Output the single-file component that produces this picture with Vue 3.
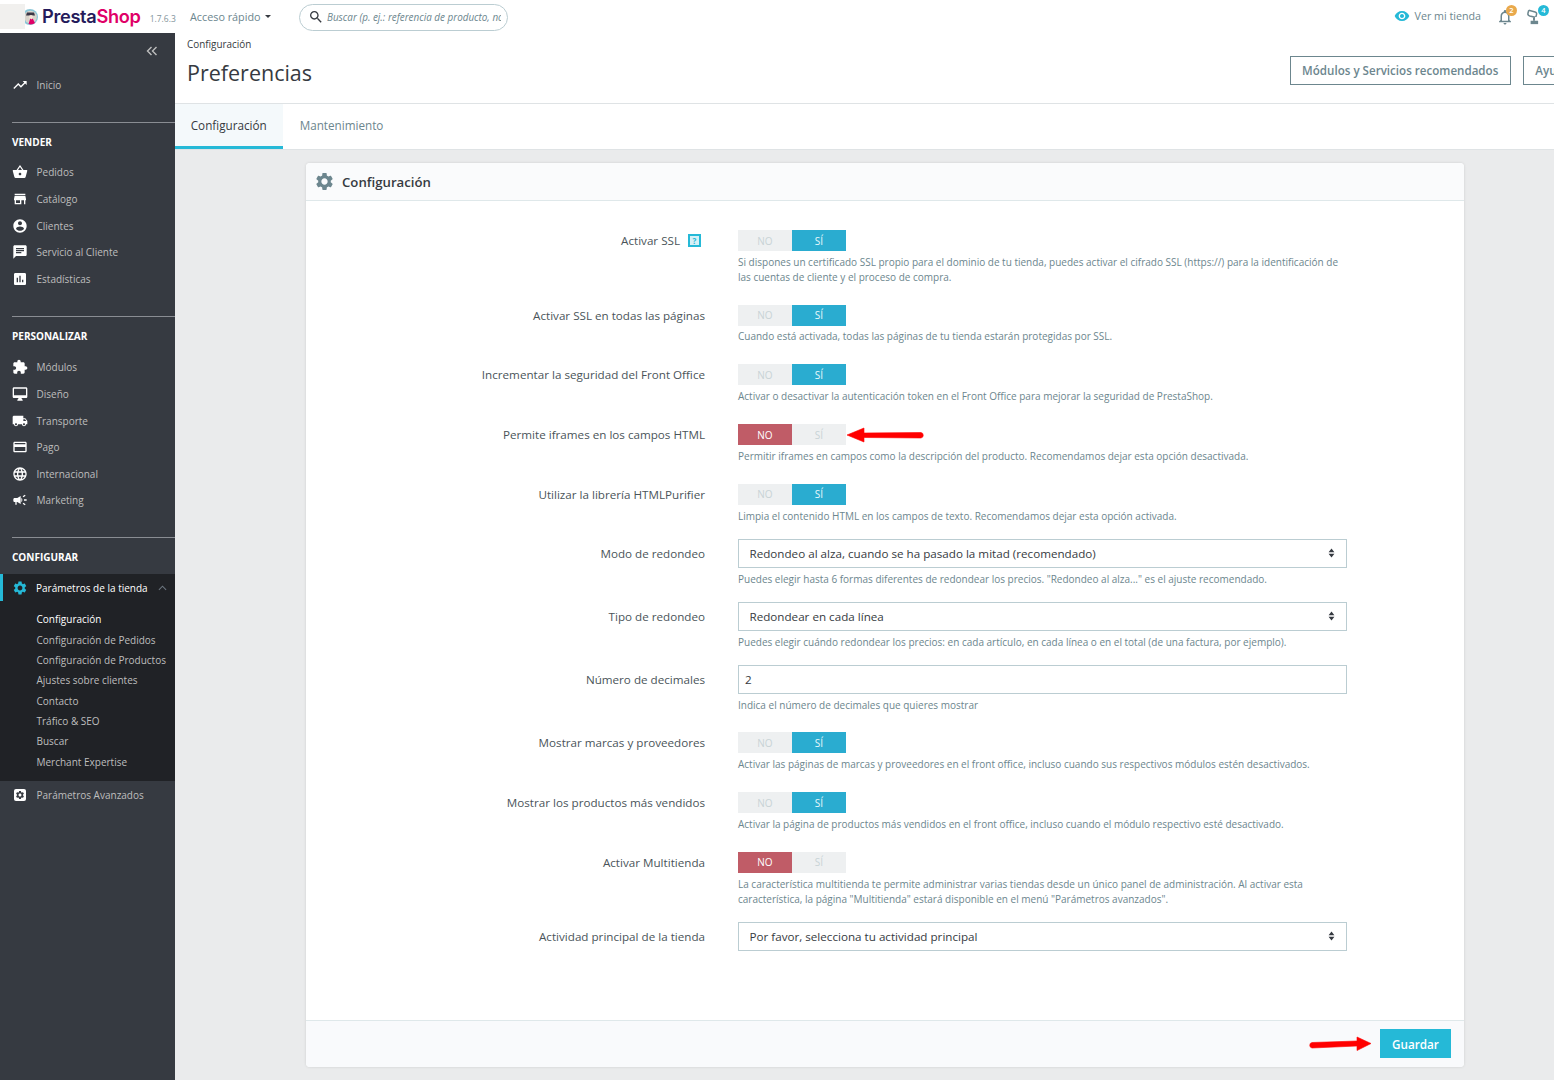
<script setup>
const P = {
  trend: 'M16 6l2.29 2.29-4.88 4.88-4-4L2 16.59 3.41 18l6-6 4 4 6.3-6.29L22 12V6z',
  basket: 'M17.21 9l-4.38-6.56c-.19-.28-.51-.42-.83-.42-.32 0-.64.14-.83.43L6.79 9H2c-.55 0-1 .45-1 1 0 .09.01.18.04.27l2.54 9.27c.23.84 1 1.46 1.92 1.46h13c.92 0 1.69-.62 1.93-1.46l2.54-9.27L23 10c0-.55-.45-1-1-1h-4.79zM9 9l3-4.4L15 9H9zm3 8c-1.1 0-2-.9-2-2s.9-2 2-2 2 .9 2 2-.9 2-2 2z',
  store: 'M20 4H4v2h16V4zm1 10v-2l-1-5H4l-1 5v2h1v6h10v-6h4v6h2v-6h1zm-9 4H6v-4h6v4z',
  account: 'M12 2C6.48 2 2 6.48 2 12s4.48 10 10 10 10-4.48 10-10S17.52 2 12 2zm0 3c1.66 0 3 1.34 3 3s-1.34 3-3 3-3-1.34-3-3 1.34-3 3-3zm0 14.2c-2.5 0-4.71-1.28-6-3.22.03-1.99 4-3.08 6-3.08 1.99 0 5.97 1.09 6 3.08-1.29 1.94-3.5 3.22-6 3.22z',
  chat: 'M20 2H4c-1.1 0-1.99.9-1.99 2L2 22l4-4h14c1.1 0 2-.9 2-2V4c0-1.1-.9-2-2-2zM6 9h12v2H6V9zm8 5H6v-2h8v2zm4-6H6V6h12v2z',
  stats: 'M19 3H5c-1.1 0-2 .9-2 2v14c0 1.1.9 2 2 2h14c1.1 0 2-.9 2-2V5c0-1.1-.9-2-2-2zM9 17H7v-7h2v7zm4 0h-2V7h2v10zm4 0h-2v-4h2v4z',
  puzzle: 'M20.5 11H19V7c0-1.1-.9-2-2-2h-4V3.5C13 2.12 11.88 1 10.5 1S8 2.12 8 3.5V5H4c-1.1 0-1.99.9-1.99 2v3.8H3.5c1.49 0 2.7 1.21 2.7 2.7s-1.21 2.7-2.7 2.7H2V20c0 1.1.9 2 2 2h3.8v-1.5c0-1.49 1.21-2.7 2.7-2.7 1.49 0 2.7 1.21 2.7 2.7V22H17c1.1 0 2-.9 2-2v-4h1.5c1.38 0 2.5-1.12 2.5-2.5S21.88 11 20.5 11z',
  desktop: 'M21 2H3c-1.1 0-2 .9-2 2v12c0 1.1.9 2 2 2h7l-2 3v1h8v-1l-2-3h7c1.1 0 2-.9 2-2V4c0-1.1-.9-2-2-2zm0 12H3V4h18v10z',
  truck: 'M20 8h-3V4H3c-1.1 0-2 .9-2 2v11h2c0 1.66 1.34 3 3 3s3-1.34 3-3h6c0 1.66 1.34 3 3 3s3-1.34 3-3h2v-5l-3-4zM6 18.5c-.83 0-1.5-.67-1.5-1.5s.67-1.5 1.5-1.5 1.5.67 1.5 1.5-.67 1.5-1.5 1.5zm13.5-9l1.96 2.5H17V9.5h2.5zm-1.5 9c-.83 0-1.5-.67-1.5-1.5s.67-1.5 1.5-1.5 1.5.67 1.5 1.5-.67 1.5-1.5 1.5z',
  card: 'M20 4H4c-1.11 0-1.99.89-1.99 2L2 18c0 1.11.89 2 2 2h16c1.11 0 2-.89 2-2V6c0-1.11-.89-2-2-2zm0 14H4v-6h16v6zm0-10H4V6h16v2z',
  globe: 'M11.99 2C6.47 2 2 6.48 2 12s4.47 10 9.99 10C17.52 22 22 17.52 22 12S17.52 2 11.99 2zm6.93 6h-2.95c-.32-1.25-.78-2.45-1.38-3.56 1.84.63 3.37 1.91 4.33 3.56zM12 4.04c.83 1.2 1.48 2.53 1.91 3.96h-3.82c.43-1.43 1.08-2.76 1.91-3.96zM4.26 14C4.1 13.36 4 12.69 4 12s.1-1.36.26-2h3.38c-.08.66-.14 1.32-.14 2 0 .68.06 1.34.14 2H4.26zm.82 2h2.95c.32 1.25.78 2.45 1.38 3.56-1.84-.63-3.37-1.9-4.33-3.56zm2.95-8H5.08c.96-1.66 2.49-2.93 4.33-3.56C8.81 5.55 8.35 6.75 8.03 8zM12 19.96c-.83-1.2-1.48-2.53-1.91-3.96h3.82c-.43 1.43-1.08 2.76-1.91 3.96zM14.34 14H9.66c-.09-.66-.16-1.32-.16-2 0-.68.07-1.35.16-2h4.68c.09.65.16 1.32.16 2 0 .68-.07 1.34-.16 2zm.25 5.56c.6-1.11 1.06-2.31 1.38-3.56h2.95c-.96 1.65-2.49 2.93-4.33 3.56zM16.36 14c.08-.66.14-1.32.14-2 0-.68-.06-1.34-.14-2h3.38c.16.64.26 1.31.26 2s-.1 1.36-.26 2h-3.38z',
  mega: 'M18 11v2h4v-2h-4zm-2 6.61c.96.71 2.21 1.65 3.2 2.39.4-.53.8-1.07 1.2-1.6-.99-.74-2.24-1.68-3.2-2.4-.4.54-.8 1.08-1.2 1.61zM20.4 5.6c-.4-.53-.8-1.07-1.2-1.6-.99.74-2.24 1.68-3.2 2.4.4.53.8 1.07 1.2 1.6.96-.72 2.21-1.65 3.2-2.4zM4 9c-1.1 0-2 .9-2 2v2c0 1.1.9 2 2 2h1v4h2v-4h1l5 3V6L8 9H4zm11.5 3c0-1.33-.58-2.53-1.5-3.35v6.69c.92-.81 1.5-2.01 1.5-3.34z',
  gear: 'M19.14 12.94c.04-.3.06-.61.06-.94 0-.32-.02-.64-.07-.94l2.03-1.58c.18-.14.23-.41.12-.61l-1.92-3.32c-.12-.22-.37-.29-.59-.22l-2.39.96c-.5-.38-1.03-.7-1.62-.94l-.36-2.54c-.04-.24-.24-.41-.48-.41h-3.84c-.24 0-.43.17-.47.41l-.36 2.54c-.59.24-1.13.57-1.62.94l-2.39-.96c-.22-.08-.47 0-.59.22L2.74 8.87c-.12.21-.08.47.12.61l2.03 1.58c-.05.3-.09.63-.09.94s.02.64.07.94l-2.03 1.58c-.18.14-.23.41-.12.61l1.92 3.32c.12.22.37.29.59.22l2.39-.96c.5.38 1.03.7 1.62.94l.36 2.54c.05.24.24.41.48.41h3.84c.24 0 .44-.17.47-.41l.36-2.54c.59-.24 1.13-.56 1.62-.94l2.39.96c.22.08.47 0 .59-.22l1.92-3.32c.12-.22.07-.47-.12-.61l-2.01-1.58zM12 15.6c-1.98 0-3.6-1.62-3.6-3.6s1.62-3.6 3.6-3.6 3.6 1.62 3.6 3.6-1.62 3.6-3.6 3.6z',
  eye: 'M12 4.5C7 4.5 2.73 7.61 1 12c1.73 4.39 6 7.5 11 7.5s9.27-3.11 11-7.5c-1.73-4.39-6-7.5-11-7.5zM12 17c-2.76 0-5-2.24-5-5s2.24-5 5-5 5 2.24 5 5-2.24 5-5 5zm0-8c-1.66 0-3 1.34-3 3s1.34 3 3 3 3-1.34 3-3-1.34-3-3-3z',
  bell: 'M12 22c1.1 0 2-.9 2-2h-4c0 1.1.9 2 2 2zm6-6v-5c0-3.07-1.63-5.64-4.5-6.32V4c0-.83-.67-1.5-1.5-1.5s-1.5.67-1.5 1.5v.68C7.64 5.36 6 7.92 6 11v5l-2 2v1h16v-1l-2-2zm-2 1H8v-6c0-2.48 1.51-4.5 4-4.5s4 2.02 4 4.5v6z',
  search: 'M15.5 14h-.79l-.28-.27C15.41 12.59 16 11.11 16 9.5 16 5.91 13.09 3 9.5 3S3 5.91 3 9.5 5.91 16 9.5 16c1.61 0 3.09-.59 4.23-1.57l.27.28v.79l5 4.99L20.49 19l-4.99-5zm-6 0C7.01 14 5 11.99 5 9.5S7.01 5 9.5 5 14 7.01 14 9.5 11.99 14 9.5 14z'
}

const groups = [
  { title: 'VENDER', cls: 'g-vender', items: [
    ['Pedidos', P.basket], ['Catálogo', P.store], ['Clientes', P.account],
    ['Servicio al Cliente', P.chat], ['Estadísticas', P.stats]
  ] },
  { title: 'PERSONALIZAR', cls: 'g-pers', items: [
    ['Módulos', P.puzzle], ['Diseño', P.desktop], ['Transporte', P.truck],
    ['Pago', P.card], ['Internacional', P.globe], ['Marketing', P.mega]
  ] }
]

const subItems = ['Configuración', 'Configuración de Pedidos', 'Configuración de Productos', 'Ajustes sobre clientes', 'Contacto', 'Tráfico & SEO', 'Buscar', 'Merchant Expertise']

const rows = [
  { label: 'Activar SSL', type: 'toggle', on: true, hint: true, help: 'Si dispones un certificado SSL propio para el dominio de tu tienda, puedes activar el cifrado SSL (https://) para la identificación de las cuentas de cliente y el proceso de compra.' },
  { label: 'Activar SSL en todas las páginas', type: 'toggle', on: true, help: 'Cuando está activada, todas las páginas de tu tienda estarán protegidas por SSL.' },
  { label: 'Incrementar la seguridad del Front Office', type: 'toggle', on: true, help: 'Activar o desactivar la autenticación token en el Front Office para mejorar la seguridad de PrestaShop.' },
  { label: 'Permite iframes en los campos HTML', type: 'toggle', on: false, arrow: true, help: 'Permitir iframes en campos como la descripción del producto. Recomendamos dejar esta opción desactivada.' },
  { label: 'Utilizar la librería HTMLPurifier', type: 'toggle', on: true, help: 'Limpia el contenido HTML en los campos de texto. Recomendamos dejar esta opción activada.' },
  { label: 'Modo de redondeo', type: 'select', value: 'Redondeo al alza, cuando se ha pasado la mitad (recomendado)', help: 'Puedes elegir hasta 6 formas diferentes de redondear los precios. "Redondeo al alza..." es el ajuste recomendado.' },
  { label: 'Tipo de redondeo', type: 'select', value: 'Redondear en cada línea', help: 'Puedes elegir cuándo redondear los precios: en cada artículo, en cada línea o en el total (de una factura, por ejemplo).' },
  { label: 'Número de decimales', type: 'input', value: '2', help: 'Indica el número de decimales que quieres mostrar' },
  { label: 'Mostrar marcas y proveedores', type: 'toggle', on: true, help: 'Activar las páginas de marcas y proveedores en el front office, incluso cuando sus respectivos módulos estén desactivados.' },
  { label: 'Mostrar los productos más vendidos', type: 'toggle', on: true, help: 'Activar la página de productos más vendidos en el front office, incluso cuando el módulo respectivo esté desactivado.' },
  { label: 'Activar Multitienda', type: 'toggle', on: false, help: 'La característica multitienda te permite administrar varias tiendas desde un único panel de administración. Al activar esta característica, la página "Multitienda" estará disponible en el menú "Parámetros avanzados".' },
  { label: 'Actividad principal de la tienda', type: 'select', value: 'Por favor, selecciona tu actividad principal' }
]
</script>

<template>
  <div class="app">
    <header class="topbar">
      <div class="logo">
        <svg class="mascot" viewBox="0 0 16 16" width="16" height="16">
          <circle cx="8" cy="8" r="8" fill="#8cc7d8"/>
          <circle cx="8.500" cy="8" r="6.300" fill="#d9d4cc"/>
          <path d="M5 3.500h7l1 3H4z" fill="#3b3545"/>
          <circle cx="9" cy="8" r="2" fill="#f3e3d5"/>
          <path d="M6.500 15l1.800-5.500 1.200 1 1.200-1 2.300 4.500c-1.500 1.300-4 2-6.500 1z" fill="#df0067"/>
        </svg>
        <span class="logo-patch"></span>
        <span class="logo-text"><span class="presta">Presta</span><span class="shop">Shop</span></span>
        <span class="version">1.7.6.3</span>
      </div>
      <div class="quick">Acceso rápido<span class="caret"></span></div>
      <div class="search">
        <svg viewBox="0 0 24 24" width="16" height="16"><path :d="P.search" fill="#363a41"/></svg>
        <span class="search-text">Buscar (p. ej.: referencia de producto, nombre de cliente…)</span>
      </div>
      <div class="top-right">
        <a class="view-shop">
          <svg viewBox="0 0 24 24" width="16" height="16"><path :d="P.eye" fill="#25b9d7"/></svg>
          <span>Ver mi tienda</span>
        </a>
        <span class="notif n-bell">
          <svg viewBox="0 0 24 24" width="18" height="18"><path :d="P.bell" fill="#6c868e"/></svg>
          <b class="badge orange">2</b>
        </span>
        <span class="notif n-trophy">
          <svg viewBox="0 0 24 24" width="18" height="18">
            <path d="M5 3l8.500 2.200c1.500.4 2.300 1.900 1.900 3.300l-.9 3.300M5 3L4 6.600c-.5 1.800.5 3.500 2.300 4l7.200 1.800" fill="none" stroke="#6c868e" stroke-width="2"/>
            <path d="M12 12.500V17" stroke="#6c868e" stroke-width="2.600"/>
            <path d="M7.500 17h10v4.500h-10z" fill="#6c868e"/>
          </svg>
          <b class="badge blue">4</b>
        </span>
      </div>
    </header>

    <div class="body">
      <aside class="sidebar">
        <div class="collapse">
          <svg viewBox="0 0 12 10" width="12" height="10"><path d="M5.500 1L1.500 5l4 4M10.500 1l-4 4 4 4" fill="none" stroke="#bebebe" stroke-width="1.4"/></svg>
        </div>
        <div class="nav-item home">
          <svg viewBox="0 0 24 24" width="16" height="16"><path :d="P.trend" fill="#fff"/></svg>
          <span>Inicio</span>
        </div>

        <section v-for="g in groups" :key="g.title" class="group" :class="g.cls">
          <h4>{{ g.title }}</h4>
          <div v-for="it in g.items" :key="it[0]" class="nav-item">
            <svg viewBox="0 0 24 24" width="16" height="16"><path :d="it[1]" fill="#fff"/></svg>
            <span>{{ it[0] }}</span>
          </div>
        </section>

        <section class="group g-conf">
          <h4>CONFIGURAR</h4>
          <div class="open-block">
            <div class="open-head">
              <svg viewBox="0 0 24 24" width="16" height="16"><path :d="P.gear" fill="#25b9d7"/></svg>
              <span>Parámetros de la tienda</span>
              <svg class="chev" viewBox="0 0 10 6" width="9" height="6"><path d="M1 5l4-4 4 4" fill="none" stroke="#6c7680" stroke-width="1.2"/></svg>
            </div>
            <ul class="sub">
              <li v-for="(s, i) in subItems" :key="s" :class="{ current: i === 0 }">{{ s }}</li>
            </ul>
          </div>
          <div class="nav-item adv">
            <span class="adv-icon"><svg viewBox="0 0 24 24" width="10" height="10"><path :d="P.gear" fill="#363a41"/></svg></span>
            <span>Parámetros Avanzados</span>
          </div>
        </section>
      </aside>

      <main class="main">
        <div class="page-head">
          <div class="crumb">Configuración</div>
          <div class="title-row">
            <h1>Preferencias</h1>
            <div class="head-btns">
              <button class="outline">Módulos y Servicios recomendados</button>
              <button class="outline">Ayuda</button>
            </div>
          </div>
        </div>
        <nav class="tabs">
          <a class="tab active">Configuración</a>
          <a class="tab">Mantenimiento</a>
        </nav>
        <div class="content">
          <div class="panel">
            <div class="panel-head">
              <svg viewBox="0 0 24 24" width="21" height="21"><path :d="P.gear" fill="#6c868e"/></svg>
              <span>Configuración</span>
            </div>
            <div class="form">
              <div v-for="r in rows" :key="r.label" class="row" :class="'row-' + r.type">
                <div class="label" :class="'label-' + r.type">
                  <span>{{ r.label }}</span>
                  <span v-if="r.hint" class="hint">?</span>
                </div>
                <div class="control">
                  <div v-if="r.type === 'toggle'" class="toggle">
                    <span class="half" :class="{ 'no-on': !r.on }">NO</span>
                    <span class="half" :class="{ 'si-on': r.on }">SÍ</span>
                    <svg v-if="r.arrow" class="arrow arrow-left" viewBox="0 0 78 16" width="78" height="16">
                      <path d="M1 8L18 1v5l57-.5a2.800 2.800 0 010 5.500L18 10.500V15z" fill="#f00" stroke="#f00" stroke-width=".6" stroke-linejoin="round"/>
                    </svg>
                  </div>
                  <div v-else-if="r.type === 'select'" class="select">
                    <span>{{ r.value }}</span>
                    <svg viewBox="0 0 8 12" width="7" height="10"><path d="M4 .5L7.500 5H.5zM4 11.500L.5 7h7z" fill="#363a41"/></svg>
                  </div>
                  <input v-else class="text-input" :value="r.value" />
                  <p v-if="r.help" class="help">{{ r.help }}</p>
                </div>
              </div>
            </div>
            <div class="panel-foot">
              <svg class="arrow arrow-right" viewBox="0 0 64 18" width="64" height="18">
                <path d="M3 6.500L48 5V1L62 7.500 48 14.500V10L3 12a2.800 2.800 0 010-5.500z" fill="#f00" stroke="#f00" stroke-width=".6" stroke-linejoin="round"/>
              </svg>
              <button class="save">Guardar</button>
            </div>
          </div>
        </div>
      </main>
    </div>
  </div>
</template>

<style>
html, body { margin: 0; height: 1080px; overflow: hidden; background: #fff; }
</style>

<style scoped>
.app { width: 1554px; height: 1080px; display: flex; flex-direction: column; font-family: "Open Sans", sans-serif; color: #363a41; overflow: hidden; }

.topbar { height: 33px; flex: none; display: flex; align-items: center; background: #fff; position: relative; }
.logo { width: 190px; height: 33px; flex: none; display: flex; align-items: center; padding-left: 22px; box-sizing: border-box; position: relative; }
.logo-patch { position: absolute; left: 0; top: 4px; width: 25px; height: 25px; background: #f1f0ee; }
.mascot { position: relative; flex: none; margin-top: 1px; }
.logo-text { font-family: Inter, sans-serif; font-size: 18.2px; font-weight: 600; letter-spacing: -0.3px; margin-left: 4px; line-height: 33px; }
.presta { color: #251b5b; }
.shop { color: #df0067; }
.version { font-size: 8.5px; color: #7f949b; margin-left: 9px; margin-top: 3px; }
.quick { font-size: 10.8px; color: #6c868e; width: 109px; flex: none; display: flex; align-items: center; margin-top: -1px; }
.caret { width: 0; height: 0; margin-left: 4px; border: 3.5px solid transparent; border-top-color: #363a41; border-bottom: 0; }
.search { width: 209px; height: 27px; flex: none; box-sizing: border-box; border: 1px solid #bbcdd2; border-radius: 14px; display: flex; align-items: center; padding: 0 6px 0 8px; gap: 3px; margin-top: 1px; }
.search svg { flex: none; }
.search-text { font-size: 9.9px; font-style: italic; color: #6c868e; white-space: nowrap; overflow: hidden; }
.top-right { margin-left: auto; display: flex; align-items: center; }
.view-shop { display: flex; align-items: center; gap: 4.5px; font-size: 10.7px; color: #6c868e; margin-right: 15px; margin-top: -1px; }
.notif { position: relative; display: flex; width: 18px; height: 18px; }
.n-bell { margin-right: 11px; }
.n-trophy { margin-right: 11px; }
.badge { position: absolute; top: -3px; left: 10px; width: 11px; height: 11px; border-radius: 50%; color: #fff; font-size: 7.5px; font-weight: 600; line-height: 11px; text-align: center; }
.n-trophy .badge { left: 13px; }
.orange { background: #e9a94c; }
.blue { background: #25b9d7; }

.body { flex: 1; display: flex; min-height: 0; }
.sidebar { width: 174.5px; flex: none; background: #363a41; color: #bebebe; box-sizing: border-box; position: relative; }
.collapse { height: 36px; display: flex; justify-content: flex-end; align-items: center; padding-right: 17px; box-sizing: border-box; }
.nav-item { height: 26.6px; display: flex; align-items: center; padding-left: 12px; font-size: 10px; color: #bebebe; }
.nav-item svg { flex: none; margin-right: 8.5px; }
.home { margin-top: 3px; }
.group h4 { margin: 0; font-size: 10px; font-weight: 700; color: #fff; line-height: 14px; margin-left: 12px; border-top: 1px solid #8a8d93; }
.g-vender { margin-top: 23px; }
.g-vender h4 { padding-top: 12px; padding-bottom: 10.5px; }
.g-pers { margin-top: 24px; }
.g-pers h4 { padding-top: 12px; padding-bottom: 11px; }
.g-conf { margin-top: 23.5px; }
.g-conf h4 { padding-top: 12px; padding-bottom: 10px; }
.open-block { background: #202226; }
.open-head { height: 27px; display: flex; align-items: center; padding-left: 12px; font-size: 10px; color: #fff; box-shadow: inset 3px 0 0 #25b9d7; }
.open-head svg:first-child { margin-right: 8px; flex: none; }
.chev { margin-left: auto; margin-right: 8px; flex: none; }
.sub { list-style: none; margin: 0; padding: 8px 0 9px 36.5px; }
.sub li { height: 20.4px; line-height: 20.4px; font-size: 10px; color: #bebebe; white-space: nowrap; }
.sub li.current { color: #fff; font-weight: 500; }
.adv { height: 27px; }
.adv-icon { width: 12px; height: 12px; border-radius: 2px; background: #fff; display: flex; align-items: center; justify-content: center; margin: 0 10.5px 0 2px; flex: none; }
.adv-icon svg { margin: 0; }

.main { flex: 1; min-width: 0; display: flex; flex-direction: column; overflow: hidden; background: #eaebec; }
.page-head { height: 71px; background: #fff; padding: 4px 0 0 12.5px; box-sizing: border-box; border-bottom: 1px solid #dfe3e5; flex: none; }
.crumb { font-size: 9.9px; line-height: 14px; color: #363a41; }
.title-row { display: flex; justify-content: space-between; align-items: flex-start; }
h1 { margin: 7px 0 0; font-size: 21.5px; font-weight: 400; line-height: 30px; color: #363a41; }
.head-btns { display: flex; gap: 12px; margin-right: -29px; margin-top: 5px; flex: none; }
.outline { height: 29px; padding: 0 11.5px; background: #fff; border: 1px solid #6c868e; font-family: inherit; font-size: 11.6px; font-weight: 600; color: #6c868e; white-space: nowrap; }
.tabs { height: 46px; flex: none; display: flex; background: #fff; box-sizing: border-box; border-bottom: 1px solid #dfe3e5; }
.tab { width: 108.5px; flex: none; display: flex; align-items: center; justify-content: center; font-size: 11.7px; color: #6c868e; height: 45px; box-sizing: border-box; padding-bottom: 3px; }
.tab.active { background: #f4f9fb; color: #363a41; border-bottom: 3px solid #25b9d7; padding-bottom: 0; }
.tab + .tab { width: 117px; }
.content { flex: 1; padding: 13px 90px 0 131.5px; }
.panel { background: #fff; border-radius: 4px; box-shadow: 0 0 3px rgba(0, 0, 0, .12); }
.panel-head { height: 37px; display: flex; align-items: center; gap: 7px; padding-left: 8px; background: #fafbfc; border-bottom: 1px solid #dfe8ea; font-size: 13.2px; font-weight: 600; color: #363a41; border-radius: 4px 4px 0 0; }
.form { padding: 29px 0 69px; }
.row { display: grid; grid-template-columns: 399px 609px; column-gap: 33px; }
.row-toggle { margin-top: 19.9px; }
.row-select, .row-input { margin-top: 15.2px; }
.row:first-child { margin-top: 0; }
.label { font-size: 11.65px; color: #4a5459; text-align: right; line-height: 21px; }
.label-select, .label-input { line-height: 29px; }
.row:first-child .label { display: flex; justify-content: flex-end; align-items: center; height: 21px; gap: 8px; margin-right: 4px; }
.hint { width: 9px; height: 9px; border: 2px solid #25b9d7; background: #d6f0f6; color: #25b9d7; font-size: 8px; font-weight: 700; line-height: 9px; text-align: center; display: inline-block; }
.control { min-width: 0; }
.toggle { width: 108px; height: 21px; display: flex; position: relative; }
.half { width: 54px; height: 21px; display: flex; align-items: center; justify-content: center; font-size: 10px; background: #eef0f1; color: #c8d3d6; font-weight: 500; }
.si-on { background: #2aacd0; color: #e8f8fb; font-weight: 500; }
.no-on { background: #c05c67; color: #fff; font-weight: 500; }
.arrow { position: absolute; }
.arrow-left { left: 108px; top: 3px; }
.select, .text-input { height: 29px; width: 609px; box-sizing: border-box; border: 1px solid #bbcdd2; background: #fff; font-family: inherit; font-size: 11.65px; color: #363a41; display: flex; align-items: center; }
.select { justify-content: space-between; padding: 0 11px 0 10.5px; }
.text-input { padding: 0 6px; outline: none; display: block; }
.help { margin: 3.8px 0 0; font-size: 10px; line-height: 15px; color: #6c868e; }
.panel-foot { height: 47px; box-sizing: border-box; border-top: 1px solid #dfe8ea; background: #f9fafc; display: flex; align-items: center; justify-content: flex-end; padding-right: 13px; position: relative; border-radius: 0 0 4px 4px; }
.arrow-right { right: 91px; top: 15px; }
.save { width: 71px; height: 29px; border: 0; background: #25b9d7; color: #fff; font-family: inherit; font-size: 11.7px; font-weight: 600; }
</style>
